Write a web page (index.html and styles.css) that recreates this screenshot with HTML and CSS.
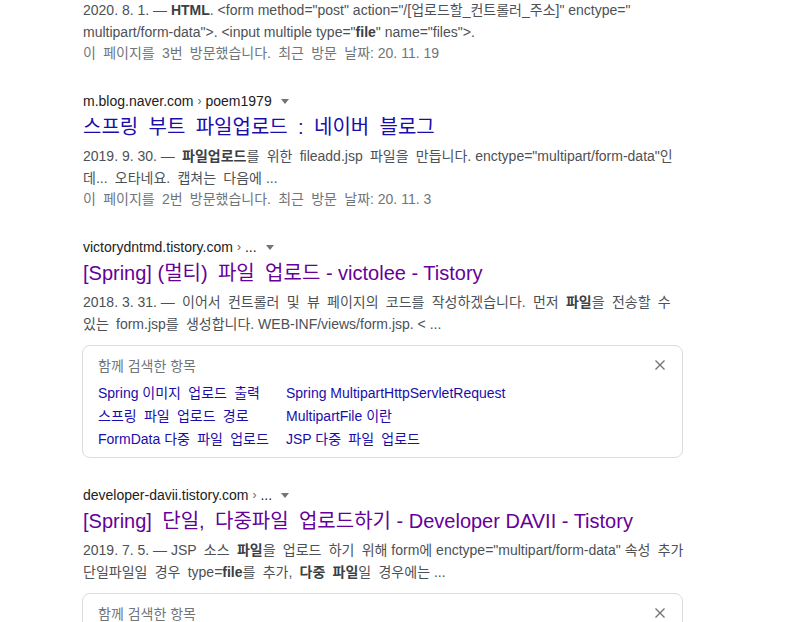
FILE: index.html
```html
<!DOCTYPE html>
<html lang="ko">
<head>
<meta charset="utf-8">
<title>검색 결과</title>
<link rel="stylesheet" href="styles.css">
</head>
<body>
<div class="results">
  <div class="result first">
    <div class="snippet">2020. 8. 1. — <b>HTML</b>. &lt;form method="post" action="/[업로드할_컨트롤러_주소]" enctype="<br>multipart/form-data"&gt;. &lt;input multiple type="<b>file</b>" name="files"&gt;.</div>
    <div class="visited"><span class="k">이 페이지를 3번 방문했습니다. 최근 방문 날짜:</span> 20. 11. 19</div>
  </div>

  <div class="result">
    <div class="url">m.blog.naver.com <span class="sep">›</span> poem1979 <span class="caret"></span></div>
    <h3 class="title new"><span class="k">스프링 부트 파일업로드 : 네이버 블로그</span></h3>
    <div class="snippet">2019. 9. 30. —<span class="k"> <b>파일업로드</b>를 위한 </span>fileadd.jsp<span class="k"> 파일을 만듭니다.</span> enctype="multipart/form-data"인<br><span class="k">데... 오타네요. 캡쳐는 다음에</span> ...</div>
    <div class="visited"><span class="k">이 페이지를 2번 방문했습니다. 최근 방문 날짜:</span> 20. 11. 3</div>
  </div>

  <div class="result">
    <div class="url">victorydntmd.tistory.com <span class="sep">›</span> ... <span class="caret"></span></div>
    <h3 class="title">[Spring] <span class="k">(멀티) 파일 업로드</span> - victolee - Tistory</h3>
    <div class="snippet">2018. 3. 31. —<span class="k"> 이어서 컨트롤러 및 뷰 페이지의 코드를 작성하겠습니다. 먼저 <b>파일</b>을 전송할 수</span><br><span class="k">있는 </span>form.jsp<span class="k">를 생성합니다.</span> WEB-INF/views/form.jsp. &lt; ...</div>
    <div class="related">
      <div class="related-head">
        <span>함께 검색한 항목</span>
        <svg class="close" width="12" height="12" viewBox="0 0 12 12"><path d="M1.5 1.5L10.5 10.5M10.5 1.5L1.5 10.5" stroke="#70757a" stroke-width="1.4" fill="none"/></svg>
      </div>
      <div class="related-grid">
        <a>Spring <span class="k">이미지 업로드 출력</span></a>
        <a>Spring MultipartHttpServletRequest</a>
        <a><span class="k">스프링 파일 업로드 경로</span></a>
        <a>MultipartFile 이란</a>
        <a>FormData <span class="k">다중 파일 업로드</span></a>
        <a>JSP <span class="k">다중 파일 업로드</span></a>
      </div>
    </div>
  </div>

  <div class="result">
    <div class="url">developer-davii.tistory.com <span class="sep">›</span> ... <span class="caret"></span></div>
    <h3 class="title">[Spring]<span class="k"> 단일, 다중파일 업로드하기</span> - Developer DAVII - Tistory</h3>
    <div class="snippet">2019. 7. 5. — JSP<span class="k"> 소스 <b>파일</b>을 업로드 하기 위해</span> form에 enctype="multipart/form-data" <span class="k">속성 추가</span><br><span class="k">단일파일일 경우 </span>type=<b>file</b><span class="k">를 추가, <b>다중 파일</b>일 경우에는</span> ...</div>
    <div class="related">
      <div class="related-head">
        <span>함께 검색한 항목</span>
        <svg class="close" width="12" height="12" viewBox="0 0 12 12"><path d="M1.5 1.5L10.5 10.5M10.5 1.5L1.5 10.5" stroke="#70757a" stroke-width="1.4" fill="none"/></svg>
      </div>
    </div>
  </div>
</div>
</body>
</html>
```

FILE: styles.css
```css
html, body {
  margin: 0;
  padding: 0;
  background: #fff;
}
body {
  font-family: "Liberation Sans", Arial, "Noto Sans CJK KR", sans-serif;
  font-size: 14px;
  color: #4d5156;
  overflow: hidden;
  height: 622px;
}
.results {
  width: 600px;
  margin-left: 83px;
}
.result {
  margin-bottom: 28px;
}
.result.first {
  margin-top: -1px;
}
.k {
  word-spacing: 0.24em;
}
.url {
  height: 18px;
  line-height: 18px;
  font-size: 14px;
  color: #202124;
  white-space: nowrap;
  display: flex;
  align-items: center;
}
.url .sep {
  color: #5f6368;
  font-size: 12px;
  margin: 0 4px;
}
.caret {
  display: inline-block;
  width: 0;
  height: 0;
  border-left: 4.5px solid transparent;
  border-right: 4.5px solid transparent;
  border-top: 5px solid #70757a;
  margin-left: 9px;
  margin-top: 1px;
}
.title {
  margin: 4px 0 5px 0;
  font-weight: normal;
  font-size: 20px;
  line-height: 26px;
  height: 26px;
  color: #660099;
  white-space: nowrap;
}
.title.new {
  color: #1a0dab;
}
.snippet {
  line-height: 22px;
  color: #4d5156;
  white-space: nowrap;
}
.snippet b {
  color: #3c4043;
}
.visited {
  line-height: 20px;
  padding-bottom: 1px;
  color: #70757a;
}
.related {
  margin-top: 10px;
  margin-left: -1px;
  border: 1px solid #dadce0;
  border-radius: 8px;
  padding: 10px 16px 6px 15px;
}
.related-head {
  display: flex;
  justify-content: space-between;
  align-items: center;
  line-height: 20px;
  color: #70757a;
  margin-bottom: 6px;
}
.close {
  margin-top: -2px;
}
.related-grid {
  display: grid;
  grid-template-columns: 188px auto;
  justify-content: start;
}
.related-grid a {
  line-height: 23px;
  color: #1a0dab;
  white-space: nowrap;
}
```
